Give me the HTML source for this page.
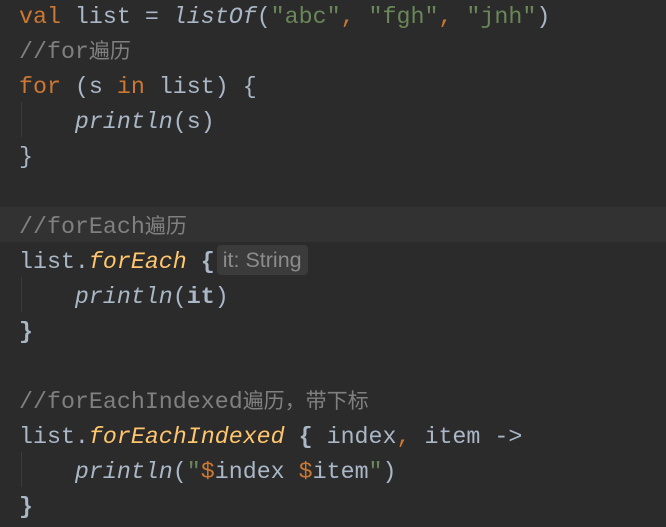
<!DOCTYPE html>
<html><head><meta charset="utf-8"><style>
body{margin:0;width:666px;height:527px;background:#2b2b2b;overflow:hidden;position:relative}
.l{position:absolute;left:19px;height:35px;line-height:35px;font-family:"Liberation Mono","Noto Sans CJK SC",monospace;font-size:23.3px;color:#a9b7c6;white-space:pre}
.k{color:#cc7832}.s{color:#6a8759}.c{color:#808080}.i{font-style:italic}.y{color:#ffc66d;font-style:italic}.b{font-weight:bold}
.cj{font-family:"Noto Sans CJK SC",sans-serif;font-size:21px;line-height:20px}
.hl{position:absolute;left:0;top:207px;width:666px;height:35px;background:#323232}
.g{position:absolute;left:21px;width:1px;background:#3c3c3c}
.hint{display:inline-block;font-family:"Liberation Sans",sans-serif;font-size:21.5px;color:#8c8c8c;background:#3b3b3b;border-radius:4px;padding:0 6px;line-height:30px;vertical-align:1px;margin-left:2px}
</style></head><body>
<div class="hl"></div>
<div class="g" style="top:102px;height:35px"></div>
<div class="g" style="top:277px;height:35px"></div>
<div class="g" style="top:452px;height:35px"></div>
<div class="l" style="top:0px"><span class="k">val</span> list = <span class="i">listOf</span>(<span class="s">"abc"</span><span class="k">,</span> <span class="s">"fgh"</span><span class="k">,</span> <span class="s">"jnh"</span>)</div>
<div class="l c" style="top:35px">//for<span class="cj">遍历</span></div>
<div class="l" style="top:70px"><span class="k">for</span> (s <span class="k">in</span> list) {</div>
<div class="l" style="top:105px">    <span class="i">println</span>(s)</div>
<div class="l" style="top:140px">}</div>
<div class="l c" style="top:210px">//forEach<span class="cj">遍历</span></div>
<div class="l" style="top:245px">list.<span class="y">forEach</span> <span class="b">{</span><span class="hint">it: String</span></div>
<div class="l" style="top:280px">    <span class="i">println</span>(<span class="b">it</span>)</div>
<div class="l b" style="top:315px">}</div>
<div class="l c" style="top:385px">//forEachIndexed<span class="cj">遍历，带下标</span></div>
<div class="l" style="top:420px">list.<span class="y">forEachIndexed</span> <span class="b">{</span> index<span class="k">,</span> item -&gt;</div>
<div class="l" style="top:455px">    <span class="i">println</span>(<span class="s">"</span><span class="k">$</span>index <span class="k">$</span>item<span class="s">"</span>)</div>
<div class="l b" style="top:490px">}</div>
</body></html>
